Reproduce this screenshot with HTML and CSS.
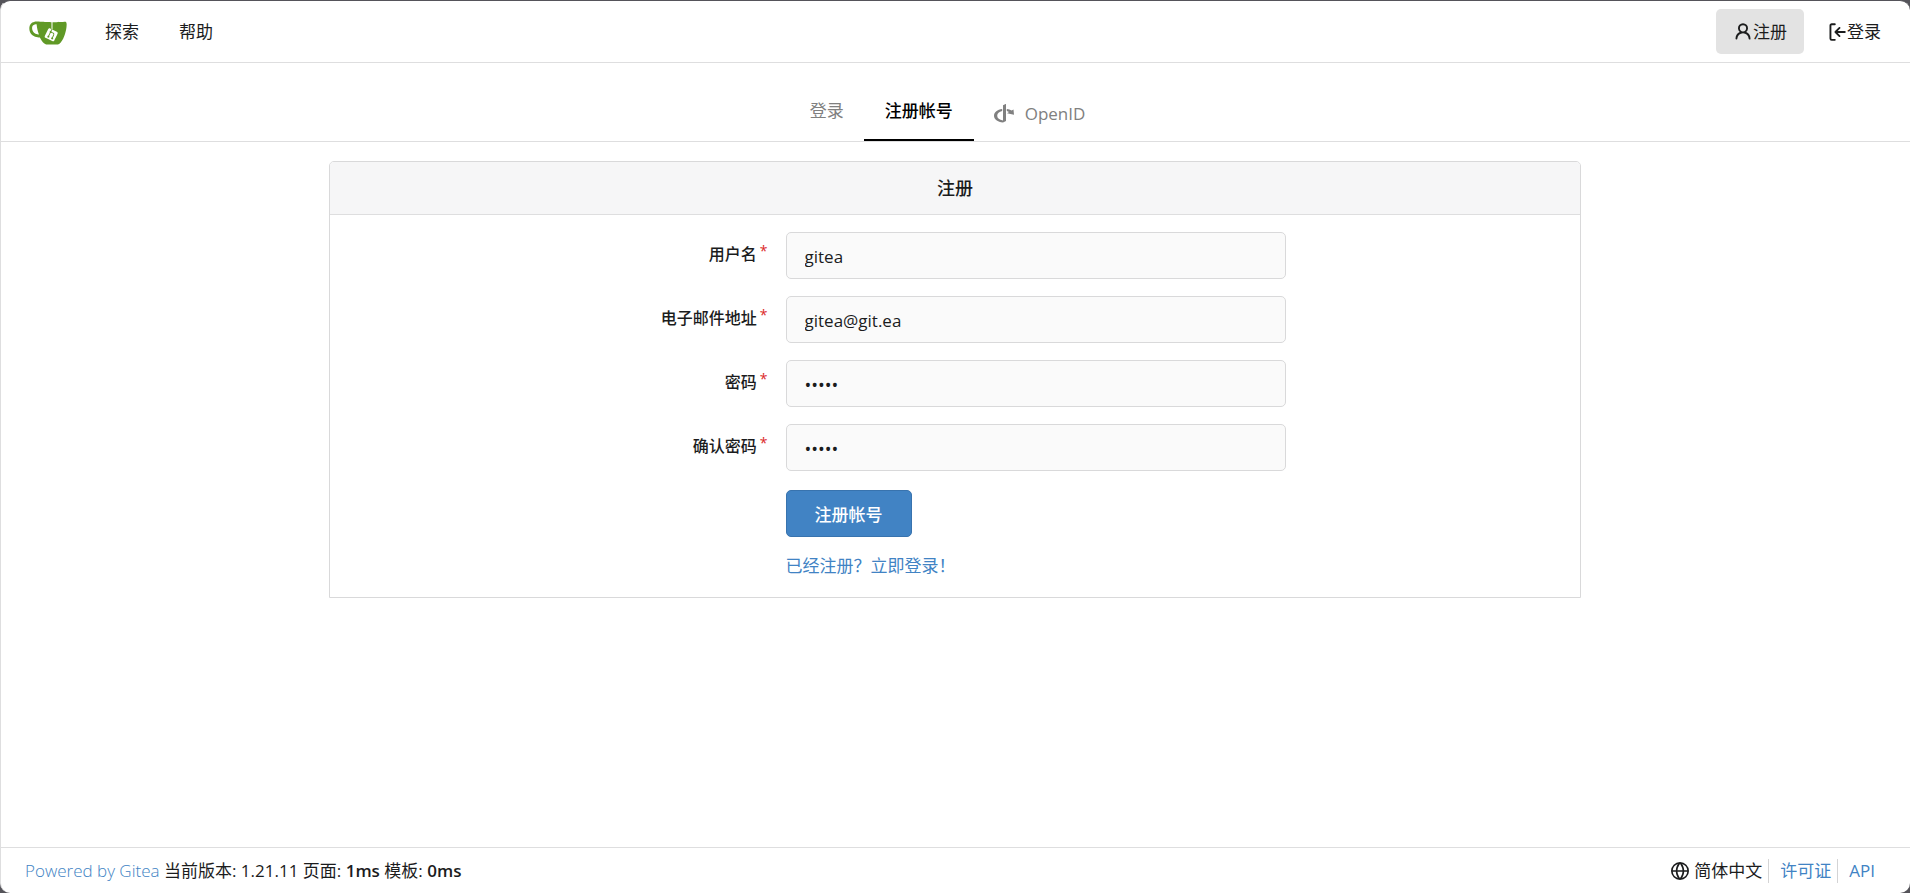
FILE: index.html
```html
<!DOCTYPE html>
<html lang="zh-CN">
<head>
<meta charset="utf-8">
<title>注册帐号 - Gitea</title>
<link rel="stylesheet" href="styles.css">
</head>
<body>
<div class="page">
  <header class="navbar">
    <div class="navbar-side">
      <a class="brand" href="#" aria-label="Gitea">
        <svg viewBox="0 0 640 640" width="38" height="38" aria-hidden="true"><path fill="#fff" d="m395.9 484.2-126.9-61c-12.5-6-17.9-21.2-11.8-33.8l61-126.9c6-12.5 21.2-17.9 33.8-11.8 17.2 8.3 27.1 13 27.1 13l-.1-109.2 16.7-.1.1 117.1s57.4 24.2 83.1 40.1c3.7 2.3 10.2 6.8 12.9 14.4 2.1 6.1 2 13.1-1 19.3l-61 126.9c-6.2 12.7-21.4 18.1-33.9 12"/><path fill="#609926" d="M622.7 149.8c-4.1-4.1-9.6-4-9.6-4s-117.2 6.6-177.9 8c-13.3.3-26.5.6-39.6.7v117.2c-5.5-2.6-11.1-5.3-16.6-7.9 0-36.4-.1-109.2-.1-109.2-29 .4-89.2-2.2-89.2-2.2s-141.4-7.1-156.8-8.5c-9.8-.6-22.5-2.1-39 1.5-8.7 1.8-33.5 7.4-53.8 26.9C-4.9 212.4 6.6 276.2 8 285.8c1.7 11.7 6.9 44.2 31.7 72.5 45.8 56.1 144.4 54.8 144.4 54.8s12.1 28.9 30.6 55.5c25 33.1 50.7 58.9 75.7 62 63 0 188.9-.1 188.9-.1s12 .1 28.3-10.3c14-8.5 26.5-23.4 26.5-23.4S547 483 565 451.5c5.5-9.7 10.1-19.1 14.1-28 0 0 55.2-117.1 55.2-231.1-1.1-34.5-9.6-40.6-11.6-42.6M125.6 353.9c-25.9-8.5-36.9-18.7-36.9-18.7S69.6 321.8 60 295.4c-16.5-44.2-1.4-71.2-1.4-71.2s8.4-22.5 38.5-30c13.8-3.7 31-3.1 31-3.1s7.1 59.4 15.7 94.2c7.2 29.2 24.8 77.7 24.8 77.7s-26.1-3.1-43-9.1m300.3 107.6s-6.1 14.5-19.6 15.4c-5.8.4-10.3-1.2-10.3-1.2s-.3-.1-5.3-2.1l-112.9-55s-10.9-5.7-12.8-15.6c-2.2-8.1 2.7-18.1 2.7-18.1L322 273s4.8-9.7 12.2-13c.6-.3 2.3-1 4.5-1.5 8.1-2.1 18 2.8 18 2.8L467.4 315s12.6 5.7 15.3 16.2c1.9 7.4-.5 14-1.8 17.2-6.3 15.4-55 113.1-55 113.1"/><path fill="#609926" d="M326.8 380.1c-8.2.1-15.4 5.8-17.3 13.8s2 16.3 9.1 20c7.7 4 17.5 1.8 22.7-5.4 5.1-7.1 4.3-16.9-1.8-23.1l24-49.1c1.5.1 3.7.2 6.2-.5 4.1-.9 7.1-3.6 7.1-3.6 4.2 1.8 8.6 3.8 13.2 6.1 4.8 2.4 9.3 4.9 13.4 7.3.9.5 1.8 1.1 2.8 1.9 1.6 1.3 3.4 3.1 4.7 5.5 1.9 5.5-1.9 14.9-1.9 14.9-2.3 7.6-18.4 40.6-18.4 40.6-8.1-.2-15.3 5-17.7 12.5-2.6 8.1 1.1 17.3 8.9 21.3s17.4 1.7 22.5-5.3c5-6.8 4.6-16.3-1.1-22.6 1.9-3.7 3.7-7.4 5.6-11.3 5-10.4 13.5-30.4 13.5-30.4.9-1.7 5.7-10.3 2.7-21.3-2.5-11.4-12.6-16.7-12.6-16.7-12.2-7.9-29.2-15.2-29.2-15.2s0-4.1-1.1-7.1c-1.1-3.1-2.8-5.1-3.9-6.3 4.7-9.7 9.4-19.3 14.1-29-4.1-2-8.1-4-12.2-6.1-4.8 9.8-9.7 19.7-14.5 29.5-6.7-.1-12.9 3.5-16.1 9.4-3.4 6.3-2.7 14.1 1.9 19.8z"/></svg>
      </a>
      <a class="nav-item" href="#">探索</a>
      <a class="nav-item" href="#">帮助</a>
    </div>
    <div class="navbar-side">
      <a class="nav-item active" href="#">
        <svg class="icon" viewBox="0 0 16 16" width="20" height="20" aria-hidden="true"><path d="M10.561 8.073a6.005 6.005 0 0 1 3.432 5.142.75.75 0 1 1-1.498.07 4.5 4.5 0 0 0-8.99 0 .75.75 0 0 1-1.498-.07 6.004 6.004 0 0 1 3.431-5.142 3.999 3.999 0 1 1 5.123 0ZM10.5 5a2.5 2.5 0 1 0-5 0 2.5 2.5 0 0 0 5 0Z"/></svg>注册
      </a>
      <a class="nav-item" href="#">
        <svg class="icon" viewBox="0 0 16 16" width="20" height="20" aria-hidden="true"><path d="M2 2.75C2 1.784 2.784 1 3.75 1h2.5a.75.75 0 0 1 0 1.5h-2.5a.25.25 0 0 0-.25.25v10.5c0 .138.112.25.25.25h2.5a.75.75 0 0 1 0 1.5h-2.5A1.75 1.75 0 0 1 2 13.25Zm6.56 4.5h5.69a.75.75 0 0 1 0 1.5H8.56l1.97 1.97a.749.749 0 0 1-.326 1.275.749.749 0 0 1-.734-.215L6.22 8.53a.75.75 0 0 1 0-1.06l3.25-3.25a.749.749 0 0 1 1.275.326.749.749 0 0 1-.215.734Z"/></svg>登录
      </a>
    </div>
  </header>

  <nav class="tabs">
    <a class="tab" href="#">登录</a>
    <a class="tab active" href="#">注册帐号</a>
    <a class="tab tab-openid" href="#">
      <svg class="icon" viewBox="0 0 22 20" width="22" height="20" aria-hidden="true"><path d="M10 1.300 13-.2V17l-3 1.500C4.500 18 1 15.500 1 11.800 1 8.200 4.400 5.600 9.200 5v2C6.200 7.600 4.200 9.400 4.200 11.800c0 2.500 2.200 4.200 5.800 4.700ZM13.800 5c1.900.2 3.500.8 4.800 1.600l1.900-1.100.5 5.200-7-1.500 2-1.200c-.6-.4-1.300-.7-2.200-.9Z"/></svg>
      OpenID
    </a>
  </nav>

  <main class="content">
    <section class="card">
      <h1 class="card-title">注册</h1>
      <form class="form">
        <label class="label" for="user">用户名</label>
        <input class="input" id="user" type="text" value="gitea">
        <label class="label" for="email">电子邮件地址</label>
        <input class="input" id="email" type="text" value="gitea@git.ea">
        <label class="label" for="password">密码</label>
        <input class="input" id="password" type="password" value="gitea">
        <label class="label" for="retype">确认密码</label>
        <input class="input" id="retype" type="password" value="gitea">
        <button class="submit" type="button">注册帐号</button>
        <a class="login-link" href="#">已经注册？立即登录！</a>
      </form>
    </section>
  </main>

  <footer class="footer">
    <div class="footer-info"><a href="#">Powered by Gitea</a> 当前版本: 1.21.11 页面: <strong>1ms</strong> 模板: <strong>0ms</strong></div>
    <div class="footer-links">
      <button class="language" type="button">
        <svg class="icon" viewBox="0 0 16 16" width="18" height="18" aria-hidden="true"><path d="M8 0a8 8 0 1 1 0 16A8 8 0 0 1 8 0ZM5.780 8.750a9.640 9.640 0 0 0 1.363 4.177c.255.426.542.832.857 1.215.245-.296.551-.705.857-1.215A9.640 9.640 0 0 0 10.220 8.750Zm4.440-1.500a9.640 9.640 0 0 0-1.363-4.177c-.307-.51-.612-.919-.857-1.215a9.927 9.927 0 0 0-.857 1.215A9.640 9.640 0 0 0 5.780 7.250Zm-5.944 1.500H1.543a6.507 6.507 0 0 0 4.666 5.500c-.123-.181-.24-.365-.352-.552-.715-1.192-1.437-2.874-1.581-4.948Zm-2.733-1.500h2.733c.144-2.074.866-3.756 1.580-4.948.12-.197.237-.381.353-.552a6.507 6.507 0 0 0-4.666 5.500Zm10.181 1.500c-.144 2.074-.866 3.756-1.580 4.948-.12.197-.237.381-.353.552a6.507 6.507 0 0 0 4.666-5.500Zm2.733-1.500a6.507 6.507 0 0 0-4.666-5.500c.123.181.24.365.353.552.714 1.192 1.436 2.874 1.580 4.948Z"/></svg>简体中文
      </button>
      <a href="#">许可证</a>
      <a href="#">API</a>
    </div>
  </footer>
</div>
</body>
</html>
```
FILE: styles.css
```css
* {
  box-sizing: border-box;
}

body {
  margin: 0;
  background: #55545a;
  color: #1b1c1d;
  font-family: "Open Sans", "Noto Sans CJK SC", sans-serif;
  font-size: 17px;
  line-height: 24px;
}

a {
  color: #4183c4;
  text-decoration: none;
}

.page {
  display: flex;
  flex-direction: column;
  min-height: 100vh;
  border-top: 1px solid #55545a;
  border-left: 1px solid #dededf;
  border-radius: 10px;
  background: #fff;
}

.icon {
  flex: none;
  fill: currentColor;
}

.navbar {
  display: flex;
  justify-content: space-between;
  padding: 8px 12px 8px 28px;
  border-bottom: 1px solid #dededf;
}

.navbar-side {
  display: flex;
  align-items: center;
  gap: 6px;
}

.brand {
  display: flex;
  margin-right: 15px;
}

.nav-item {
  display: flex;
  align-items: center;
  height: 45px;
  padding: 0 17px;
  border-radius: 5px;
  color: #1b1c1d;
}

.nav-item.active {
  background: #e3e3e3;
}

.tabs {
  display: flex;
  justify-content: center;
  padding: 18px 16px 0 0;
  border-bottom: 1px solid #dededf;
}

.tab {
  display: flex;
  align-items: center;
  gap: 10px;
  padding: 18px 20px 16px;
  border-bottom: 2px solid transparent;
  color: #808080;
}

.tab.active {
  padding-left: 21px;
  padding-right: 21px;
  border-color: #000;
  color: #000;
  font-weight: 500;
}

.tab-openid {
  padding-top: 21px;
  padding-bottom: 13px;
  padding-left: 19px;
}

.content {
  flex: 1;
  padding: 19px 19px 19px 18px;
}

.card {
  max-width: 1252px;
  margin: 0 auto;
  border: 1px solid #d9d9da;
  border-radius: 5px 5px 0 0;
}

.card-title {
  margin: 0;
  padding: 14px;
  border-bottom: 1px solid #dededf;
  border-radius: 4px 4px 0 0;
  background: #f6f6f7;
  font-size: 18px;
  font-weight: 500;
  line-height: 24px;
  text-align: center;
}

.form {
  display: grid;
  grid-template-columns: 35% 40%;
  gap: 17px 18px;
  padding: 17px 0 19px;
}

.label {
  padding-top: 10px;
  font-size: 16px;
  font-weight: 500;
  text-align: right;
}

.label::after {
  content: "*";
  margin-left: 3px;
  color: #db2828;
  font-size: 14px;
  line-height: 16px;
  vertical-align: 4px;
}

.input {
  width: 100%;
  height: 47px;
  padding: 2px 18px 0;
  border: 1px solid #d9d9da;
  border-radius: 5px;
  background: #fafafa;
  color: #1b1c1d;
  font: inherit;
}

.input[type="password"] {
  font-size: 18px;
}

.submit {
  grid-column: 2;
  justify-self: start;
  height: 47px;
  margin-top: 2px;
  padding: 2px 28px 0;
  border: 1px solid #3873ae;
  border-radius: 5px;
  background: #4183c4;
  color: #fff;
  font: inherit;
  font-weight: 500;
}

.login-link {
  grid-column: 2;
  justify-self: start;
}

.footer {
  display: flex;
  align-items: center;
  justify-content: space-between;
  padding: 11px 35px 10px 24px;
  border-top: 1px solid #dededf;
}

.footer-info a {
  font-weight: 300;
}

.footer-info strong {
  font-weight: 600;
}

.footer-links {
  display: flex;
  align-items: center;
}

.footer-links a {
  padding-left: 11px;
  margin-left: 6px;
  border-left: 1px solid #d4d4d5;
}

.language {
  display: flex;
  align-items: center;
  gap: 5px;
  padding: 0;
  border: 0;
  background: none;
  color: #1b1c1d;
  font: inherit;
}
```
